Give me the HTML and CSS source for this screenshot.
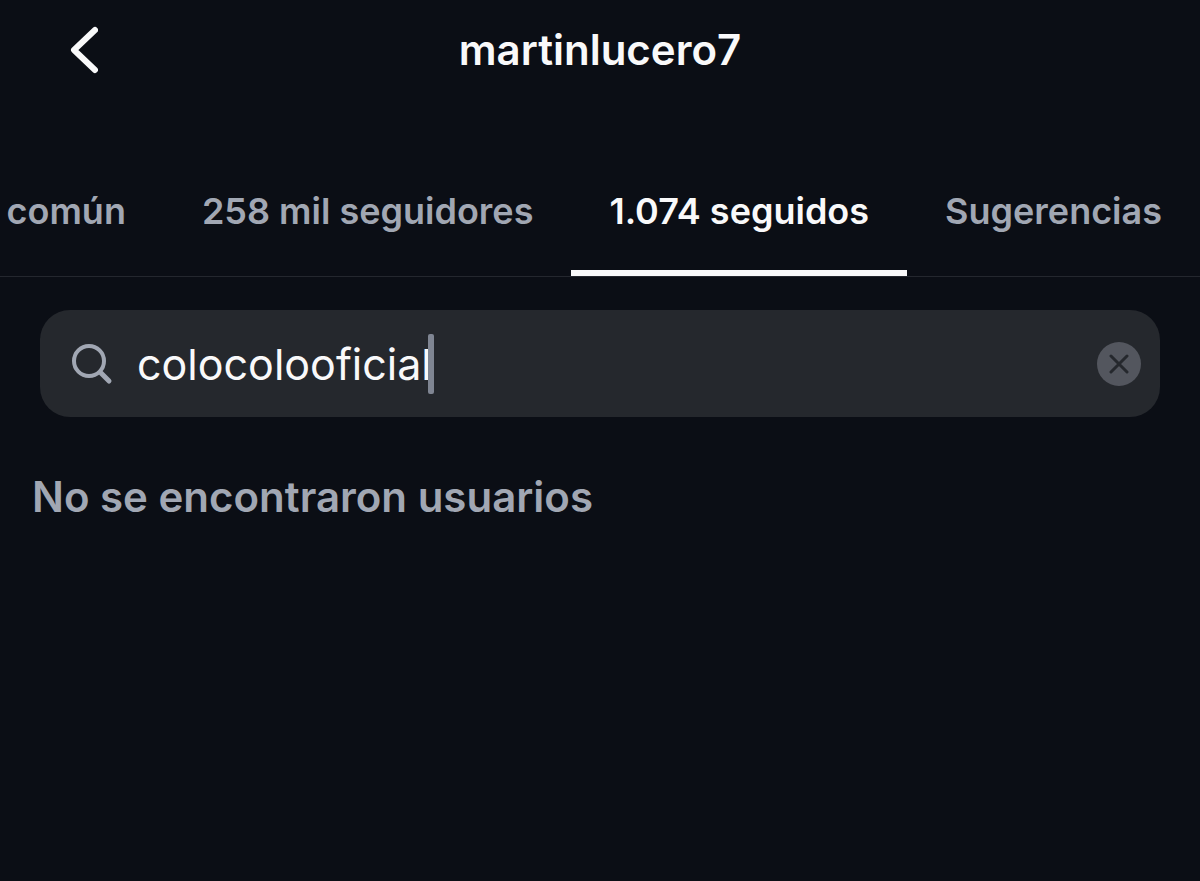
FILE: index.html
```html
<!DOCTYPE html>
<html lang="es">
<head>
    <meta charset="UTF-8">
    <meta name="viewport" content="width=device-width, initial-scale=1.0">
    <title>martinlucero7</title>
    <link rel="stylesheet" href="styles.css">
</head>
<body>
    <header class="header">
        <button class="back-btn" type="button" aria-label="Volver">
            <svg width="28" height="48" viewBox="0 0 28 48" fill="none" stroke="currentColor" stroke-width="6" stroke-linecap="round" stroke-linejoin="round">
                <path d="M25 4 L4 24 L25 44"/>
            </svg>
        </button>
        <h1 class="title">martinlucero7</h1>
    </header>

    <nav class="tabs">
        <a class="tab" href="#comun">común</a>
        <a class="tab" href="#seguidores">258 mil seguidores</a>
        <a class="tab active" href="#seguidos">1.074 seguidos</a>
        <a class="tab" href="#sugerencias">Sugerencias</a>
    </nav>

    <main class="content">
        <form class="search">
            <label class="search-icon" for="search-input" aria-label="Buscar">
                <svg width="42" height="42" viewBox="0 0 42 42" fill="none" stroke="currentColor" stroke-linecap="round">
                    <circle cx="18" cy="18" r="15" stroke-width="4"/>
                    <path d="M30 30 L38 38" stroke-width="5"/>
                </svg>
            </label>
            <div class="search-field">
                <input class="search-input" id="search-input" type="text" value="colocolooficial" autocomplete="off" spellcheck="false">
                <span class="caret"></span>
            </div>
            <button class="clear-btn" type="reset" aria-label="Borrar">
                <svg width="20" height="20" viewBox="0 0 20 20" fill="none" stroke="currentColor" stroke-width="3" stroke-linecap="round">
                    <path d="M2 2 L18 18 M18 2 L2 18"/>
                </svg>
            </button>
        </form>
        <p class="empty">No se encontraron usuarios</p>
    </main>
</body>
</html>
```
FILE: styles.css
```css
* {
    margin: 0;
    padding: 0;
    box-sizing: border-box;
}

body {
    font-family: Inter, "Liberation Sans", sans-serif;
    background: #0b0e15;
    color: #f9f9fa;
    min-height: 100vh;
    overflow-x: hidden;
}

button {
    border: none;
    background: none;
    cursor: pointer;
}

.header {
    display: grid;
    grid-template-columns: 1fr auto 1fr;
    align-items: center;
    height: 100px;
    padding: 0 70px;
}

.back-btn {
    justify-self: start;
    display: flex;
    color: #f9f9fa;
}

.title {
    font-size: 42px;
    font-weight: 600;
    line-height: 52px;
}

.tabs {
    display: flex;
    justify-content: flex-end;
    margin-top: 47px;
    border-bottom: 1px solid #24272e;
}

.tab {
    flex: none;
    padding: 40px 38px 35px;
    color: #a1a7b3;
    font-size: 36px;
    font-weight: 600;
    line-height: 48px;
    text-decoration: none;
    white-space: nowrap;
    border-bottom: 6px solid transparent;
}

.tab.active {
    color: #f9f9fa;
    border-bottom-color: #f9f9fa;
}

.content {
    padding: 33px 40px;
}

.search {
    display: flex;
    align-items: center;
    height: 107px;
    padding: 0 19px 0 31px;
    background: #25282d;
    border-radius: 30px;
}

.search-icon {
    display: flex;
    margin-right: 24px;
    color: #a1a7b3;
}

.search-field {
    flex: 1;
    display: flex;
    align-items: center;
}

.search-input {
    field-sizing: content;
    border: none;
    outline: none;
    background: none;
    color: #f9f9fa;
    font-family: inherit;
    font-size: 43px;
}

.caret {
    width: 6px;
    height: 60px;
    margin-left: -4px;
    border-radius: 2px;
    background: #7f8592;
}

.clear-btn {
    display: flex;
    align-items: center;
    justify-content: center;
    width: 44px;
    height: 44px;
    border-radius: 50%;
    background: #53565e;
    color: #25282d;
}

.empty {
    margin: 54px -8px 0;
    color: #a1a7b3;
    font-size: 42px;
    font-weight: 600;
    line-height: 52px;
}
```
